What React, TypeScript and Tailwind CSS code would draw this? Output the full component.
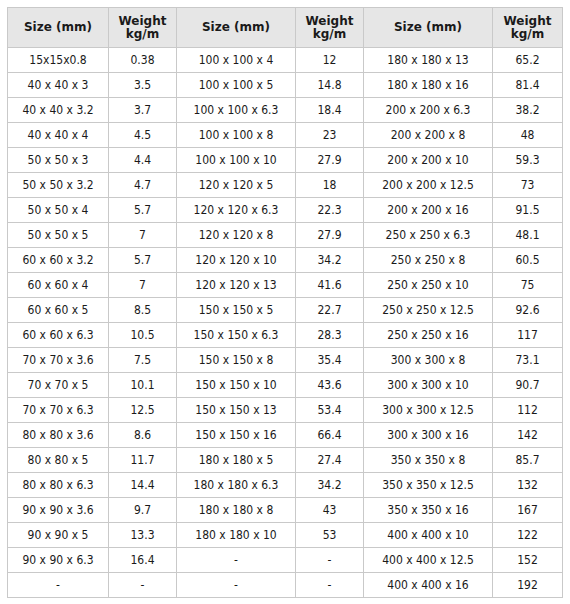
const a: [string, string][] = [
  ["15x15x0.8", "0.38"], ["40 x 40 x 3", "3.5"], ["40 x 40 x 3.2", "3.7"], ["40 x 40 x 4", "4.5"],
  ["50 x 50 x 3", "4.4"], ["50 x 50 x 3.2", "4.7"], ["50 x 50 x 4", "5.7"], ["50 x 50 x 5", "7"],
  ["60 x 60 x 3.2", "5.7"], ["60 x 60 x 4", "7"], ["60 x 60 x 5", "8.5"], ["60 x 60 x 6.3", "10.5"],
  ["70 x 70 x 3.6", "7.5"], ["70 x 70 x 5", "10.1"], ["70 x 70 x 6.3", "12.5"], ["80 x 80 x 3.6", "8.6"],
  ["80 x 80 x 5", "11.7"], ["80 x 80 x 6.3", "14.4"], ["90 x 90 x 3.6", "9.7"], ["90 x 90 x 5", "13.3"],
  ["90 x 90 x 6.3", "16.4"], ["-", "-"],
];
const b: [string, string][] = [
  ["100 x 100 x 4", "12"], ["100 x 100 x 5", "14.8"], ["100 x 100 x 6.3", "18.4"], ["100 x 100 x 8", "23"],
  ["100 x 100 x 10", "27.9"], ["120 x 120 x 5", "18"], ["120 x 120 x 6.3", "22.3"], ["120 x 120 x 8", "27.9"],
  ["120 x 120 x 10", "34.2"], ["120 x 120 x 13", "41.6"], ["150 x 150 x 5", "22.7"], ["150 x 150 x 6.3", "28.3"],
  ["150 x 150 x 8", "35.4"], ["150 x 150 x 10", "43.6"], ["150 x 150 x 13", "53.4"], ["150 x 150 x 16", "66.4"],
  ["180 x 180 x 5", "27.4"], ["180 x 180 x 6.3", "34.2"], ["180 x 180 x 8", "43"], ["180 x 180 x 10", "53"],
  ["-", "-"], ["-", "-"],
];
const c: [string, string][] = [
  ["180 x 180 x 13", "65.2"], ["180 x 180 x 16", "81.4"], ["200 x 200 x 6.3", "38.2"], ["200 x 200 x 8", "48"],
  ["200 x 200 x 10", "59.3"], ["200 x 200 x 12.5", "73"], ["200 x 200 x 16", "91.5"], ["250 x 250 x 6.3", "48.1"],
  ["250 x 250 x 8", "60.5"], ["250 x 250 x 10", "75"], ["250 x 250 x 12.5", "92.6"], ["250 x 250 x 16", "117"],
  ["300 x 300 x 8", "73.1"], ["300 x 300 x 10", "90.7"], ["300 x 300 x 12.5", "112"], ["300 x 300 x 16", "142"],
  ["350 x 350 x 8", "85.7"], ["350 x 350 x 12.5", "132"], ["350 x 350 x 16", "167"], ["400 x 400 x 10", "122"],
  ["400 x 400 x 12.5", "152"], ["400 x 400 x 16", "192"],
];

const th = "border border-[#c9c9c9] bg-[#e6e6e6] p-0 text-center align-middle font-bold text-[12px] leading-[13px] font-['DejaVu_Sans',Verdana,sans-serif]";
const td = "border border-[#c9c9c9] p-0 text-center align-middle text-[12px] font-['DejaVu_Sans_Condensed','DejaVu_Sans',sans-serif]";

function Head() {
  return (
    <>
      <th className={th}>Size (mm)</th>
      <th className={th}>Weight<br />kg/m</th>
    </>
  );
}

export default function App() {
  return (
    <div className="min-h-[604px] bg-white px-[7px] pt-[7px] text-[#1a1a1a]">
      <table className="w-[555px] table-fixed border-collapse">
        <colgroup>
          <col className="w-[101px]" />
          <col className="w-[68px]" />
          <col className="w-[119px]" />
          <col className="w-[68px]" />
          <col className="w-[129px]" />
          <col className="w-[70px]" />
        </colgroup>
        <thead>
          <tr className="h-[40px]">
            <Head />
            <Head />
            <Head />
          </tr>
        </thead>
        <tbody>
          {a.map((row, i) => (
            <tr key={i} className="h-[25px]">
              <td className={td}>{row[0]}</td>
              <td className={td}>{row[1]}</td>
              <td className={td}>{b[i][0]}</td>
              <td className={td}>{b[i][1]}</td>
              <td className={td}>{c[i][0]}</td>
              <td className={td}>{c[i][1]}</td>
            </tr>
          ))}
        </tbody>
      </table>
    </div>
  );
}
